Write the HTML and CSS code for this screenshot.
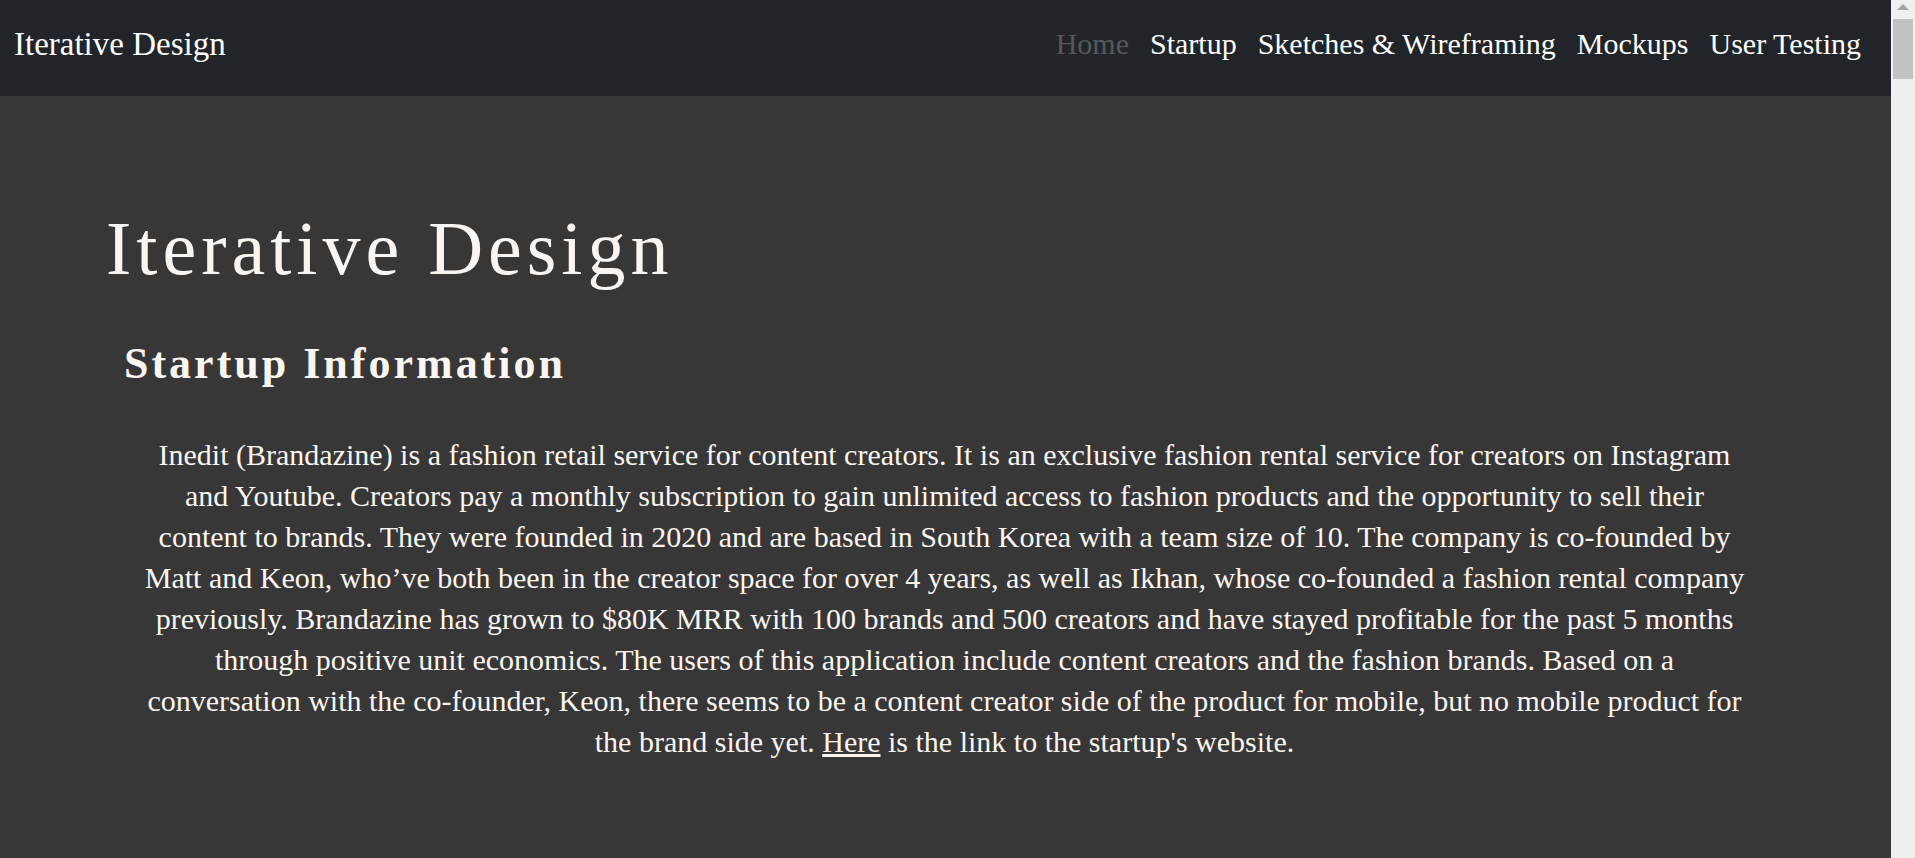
FILE: index.html
```html
<!DOCTYPE html>
<html lang="en">
<head>
<meta charset="utf-8">
<meta name="viewport" content="width=device-width, initial-scale=1">
<title>Iterative Design</title>
<link rel="stylesheet" href="styles.css">
</head>
<body>
<div class="page">
  <header class="navbar">
    <a class="brand" href="#">Iterative Design</a>
    <nav class="nav">
      <a class="nav-link active" href="#">Home</a>
      <a class="nav-link" href="#startup">Startup</a>
      <a class="nav-link" href="#sketches">Sketches &amp; Wireframing</a>
      <a class="nav-link" href="#mockups">Mockups</a>
      <a class="nav-link" href="#testing">User Testing</a>
    </nav>
  </header>
  <main class="content">
    <h1 class="title">Iterative Design</h1>
    <section id="startup">
      <h2 class="subtitle">Startup Information</h2>
      <p class="intro">Inedit (Brandazine) is a fashion retail service for content creators. It is an exclusive fashion rental service for creators on Instagram<br>
        and Youtube. Creators pay a monthly subscription to gain unlimited access to fashion products and the opportunity to sell their<br>
        content to brands. They were founded in 2020 and are based in South Korea with a team size of 10. The company is co-founded by<br>
        Matt and Keon, who’ve both been in the creator space for over 4 years, as well as Ikhan, whose co-founded a fashion rental company<br>
        previously. Brandazine has grown to $80K MRR with 100 brands and 500 creators and have stayed profitable for the past 5 months<br>
        through positive unit economics. The users of this application include content creators and the fashion brands. Based on a<br>
        conversation with the co-founder, Keon, there seems to be a content creator side of the product for mobile, but no mobile product for<br>
        the brand side yet. <a class="link" href="#">Here</a> is the link to the startup's website.</p>
    </section>
  </main>
</div>
<div class="scrollbar" aria-hidden="true">
  <svg class="arrow" width="12" height="6" viewBox="0 0 12 6"><path d="M6 0L12 6H0Z" fill="#a3a3a3"/></svg>
  <div class="thumb"></div>
</div>
</body>
</html>
```
FILE: styles.css
```css
* {
  box-sizing: border-box;
}

body {
  display: flex;
  min-height: 100vh;
  margin: 0;
  background: #373737;
  color: #faf5f0;
  font-family: Georgia, "Liberation Serif", serif;
}

.page {
  flex: 1;
  min-width: 0;
}

.navbar {
  display: flex;
  flex-wrap: wrap;
  align-items: flex-start;
  justify-content: space-between;
  padding: 24px 30px 32px 14px;
  background: #212529;
}

.brand {
  color: #fff;
  font-size: 33px;
  line-height: 40px;
  text-decoration: none;
}

.nav {
  display: flex;
  flex-wrap: wrap;
  gap: 21px;
}

.nav-link {
  color: #fff;
  font-size: 30px;
  line-height: 40px;
  text-decoration: none;
}

.nav-link.active {
  color: #55595c;
}

.content {
  padding: 108px 108px 0 106px;
}

.title {
  margin: 0;
  font-size: 76px;
  font-weight: 400;
  letter-spacing: 5px;
  line-height: 88px;
}

.subtitle {
  margin: 48px 18px 0;
  font-size: 44px;
  letter-spacing: 3px;
  line-height: 48px;
}

.intro {
  margin: 46px 24px 0;
  font-size: 30px;
  line-height: 41px;
  text-align: center;
}

.link {
  color: inherit;
}

.scrollbar {
  display: flex;
  flex-direction: column;
  align-items: center;
  gap: 9px;
  width: 24px;
  padding-top: 4px;
  background: #f0f0f0;
}

.thumb {
  width: 20px;
  height: 60px;
  background: #c1c1c1;
}
```
